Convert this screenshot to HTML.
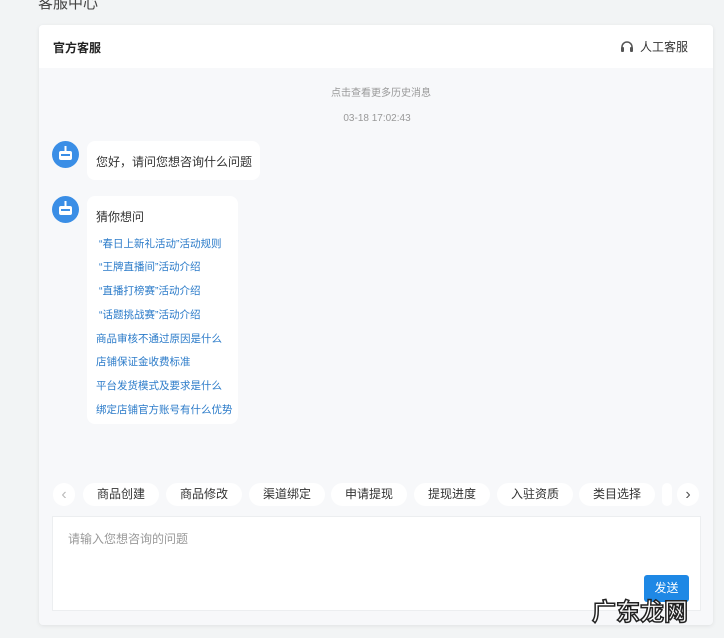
<!DOCTYPE html><html><head><meta charset="utf-8"><style>
body{margin:0;width:724px;height:638px;background:#f2f4f5;font-family:"Liberation Sans","Noto Sans CJK SC",sans-serif;overflow:hidden;position:relative;font-size:12px;color:#333}
.a{position:absolute;white-space:nowrap}
.card{left:39px;top:25px;width:674px;height:600px;background:#f7f8fa;border-radius:4px;box-shadow:0 1px 4px rgba(0,0,0,.08);overflow:hidden}
.hd{left:0;top:0;width:674px;height:43px;background:#fff}
.bub{background:#fff;border-radius:8px}
.lk{color:#2b7bc9;font-size:10.5px}
.chip{top:483px;height:23px;line-height:23px;background:#fff;border-radius:12px;text-align:center;font-size:12px;color:#333;width:76px}
</style></head><body>
<div class="a" style="left:38px;top:-8px;font-size:15px;color:#444">客服中心</div>
<div class="a card">
<div class="a hd"><div class="a" style="left:14px;top:14px;font-size:12px;font-weight:bold;color:#222">官方客服</div>
<svg class="a" style="left:581px;top:15px" width="14" height="14" viewBox="0 0 14 14"><path d="M2 9V7a5 5 0 0 1 10 0v2" fill="none" stroke="#555" stroke-width="1.5"/><rect x="1" y="7" width="3" height="5" rx="1" fill="#555"/><rect x="10" y="7" width="3" height="5" rx="1" fill="#555"/></svg>
<div class="a" style="left:601px;top:13px;font-size:12px;color:#333">人工客服</div></div>
</div>
<div class="a" style="left:0;width:762px;top:84px;text-align:center;font-size:10px;color:#999">点击查看更多历史消息</div>
<div class="a" style="left:0;width:754px;top:113px;text-align:center;font-size:10px;color:#999">03-18 17:02:43</div>
<svg class="a" style="left:52px;top:141px" width="27" height="27"><circle cx="13.5" cy="13.5" r="13.5" fill="#3a8ee6"/><rect x="7" y="10" width="13" height="9" rx="2" fill="#fff"/><rect x="12.5" y="5" width="2" height="5" fill="#fff"/><rect x="9" y="13" width="9" height="2" fill="#3a8ee6"/></svg>
<div class="a bub" style="left:87px;top:141px;width:173px;height:39px"><div class="a" style="left:9px;top:12px;font-size:12px">您好，请问您想咨询什么问题</div></div>
<svg class="a" style="left:52px;top:196px" width="27" height="27"><circle cx="13.5" cy="13.5" r="13.5" fill="#3a8ee6"/><rect x="7" y="10" width="13" height="9" rx="2" fill="#fff"/><rect x="12.5" y="5" width="2" height="5" fill="#fff"/><rect x="9" y="13" width="9" height="2" fill="#3a8ee6"/></svg>
<div class="a bub" style="left:87px;top:196px;width:151px;height:228px">
<div class="a" style="left:9px;top:12px;font-size:12px">猜你想问</div>
<div class="a lk" style="left:12px;top:40px">“春日上新礼活动”活动规则</div>
<div class="a lk" style="left:12px;top:63px">“王牌直播间”活动介绍</div>
<div class="a lk" style="left:12px;top:87px">“直播打榜赛”活动介绍</div>
<div class="a lk" style="left:12px;top:111px">“话题挑战赛”活动介绍</div>
<div class="a lk" style="left:9px;top:135px">商品审核不通过原因是什么</div>
<div class="a lk" style="left:9px;top:158px">店铺保证金收费标准</div>
<div class="a lk" style="left:9px;top:182px">平台发货模式及要求是什么</div>
<div class="a lk" style="left:9px;top:206px">绑定店铺官方账号有什么优势</div>
</div>
<div class="a chip" style="left:53px;width:22px;color:#bbb;font-size:16px">‹</div>
<div class="a chip" style="left:83px">商品创建</div>
<div class="a chip" style="left:166px">商品修改</div>
<div class="a chip" style="left:249px">渠道绑定</div>
<div class="a chip" style="left:331px">申请提现</div>
<div class="a chip" style="left:414px">提现进度</div>
<div class="a chip" style="left:497px">入驻资质</div>
<div class="a chip" style="left:579px">类目选择</div>
<div class="a chip" style="left:662px;width:10px"></div>
<div class="a chip" style="left:677px;width:22px;color:#555;font-size:16px">›</div>
<div class="a" style="left:52px;top:516px;width:647px;height:93px;background:#fff;border:1px solid #eceef0"></div>
<div class="a" style="left:68px;top:530px;font-size:12px;color:#999">请输入您想咨询的问题</div>
<div class="a" style="left:644px;top:575px;width:45px;height:27px;background:#1e88e5;border-radius:3px;color:#fff;line-height:27px;text-align:center;font-size:12px">发送</div>
<div class="a" style="left:592px;top:592px;font-size:24px;font-weight:bold;color:#fff;-webkit-text-stroke:1.5px #222">广东龙网</div>
</body></html>
